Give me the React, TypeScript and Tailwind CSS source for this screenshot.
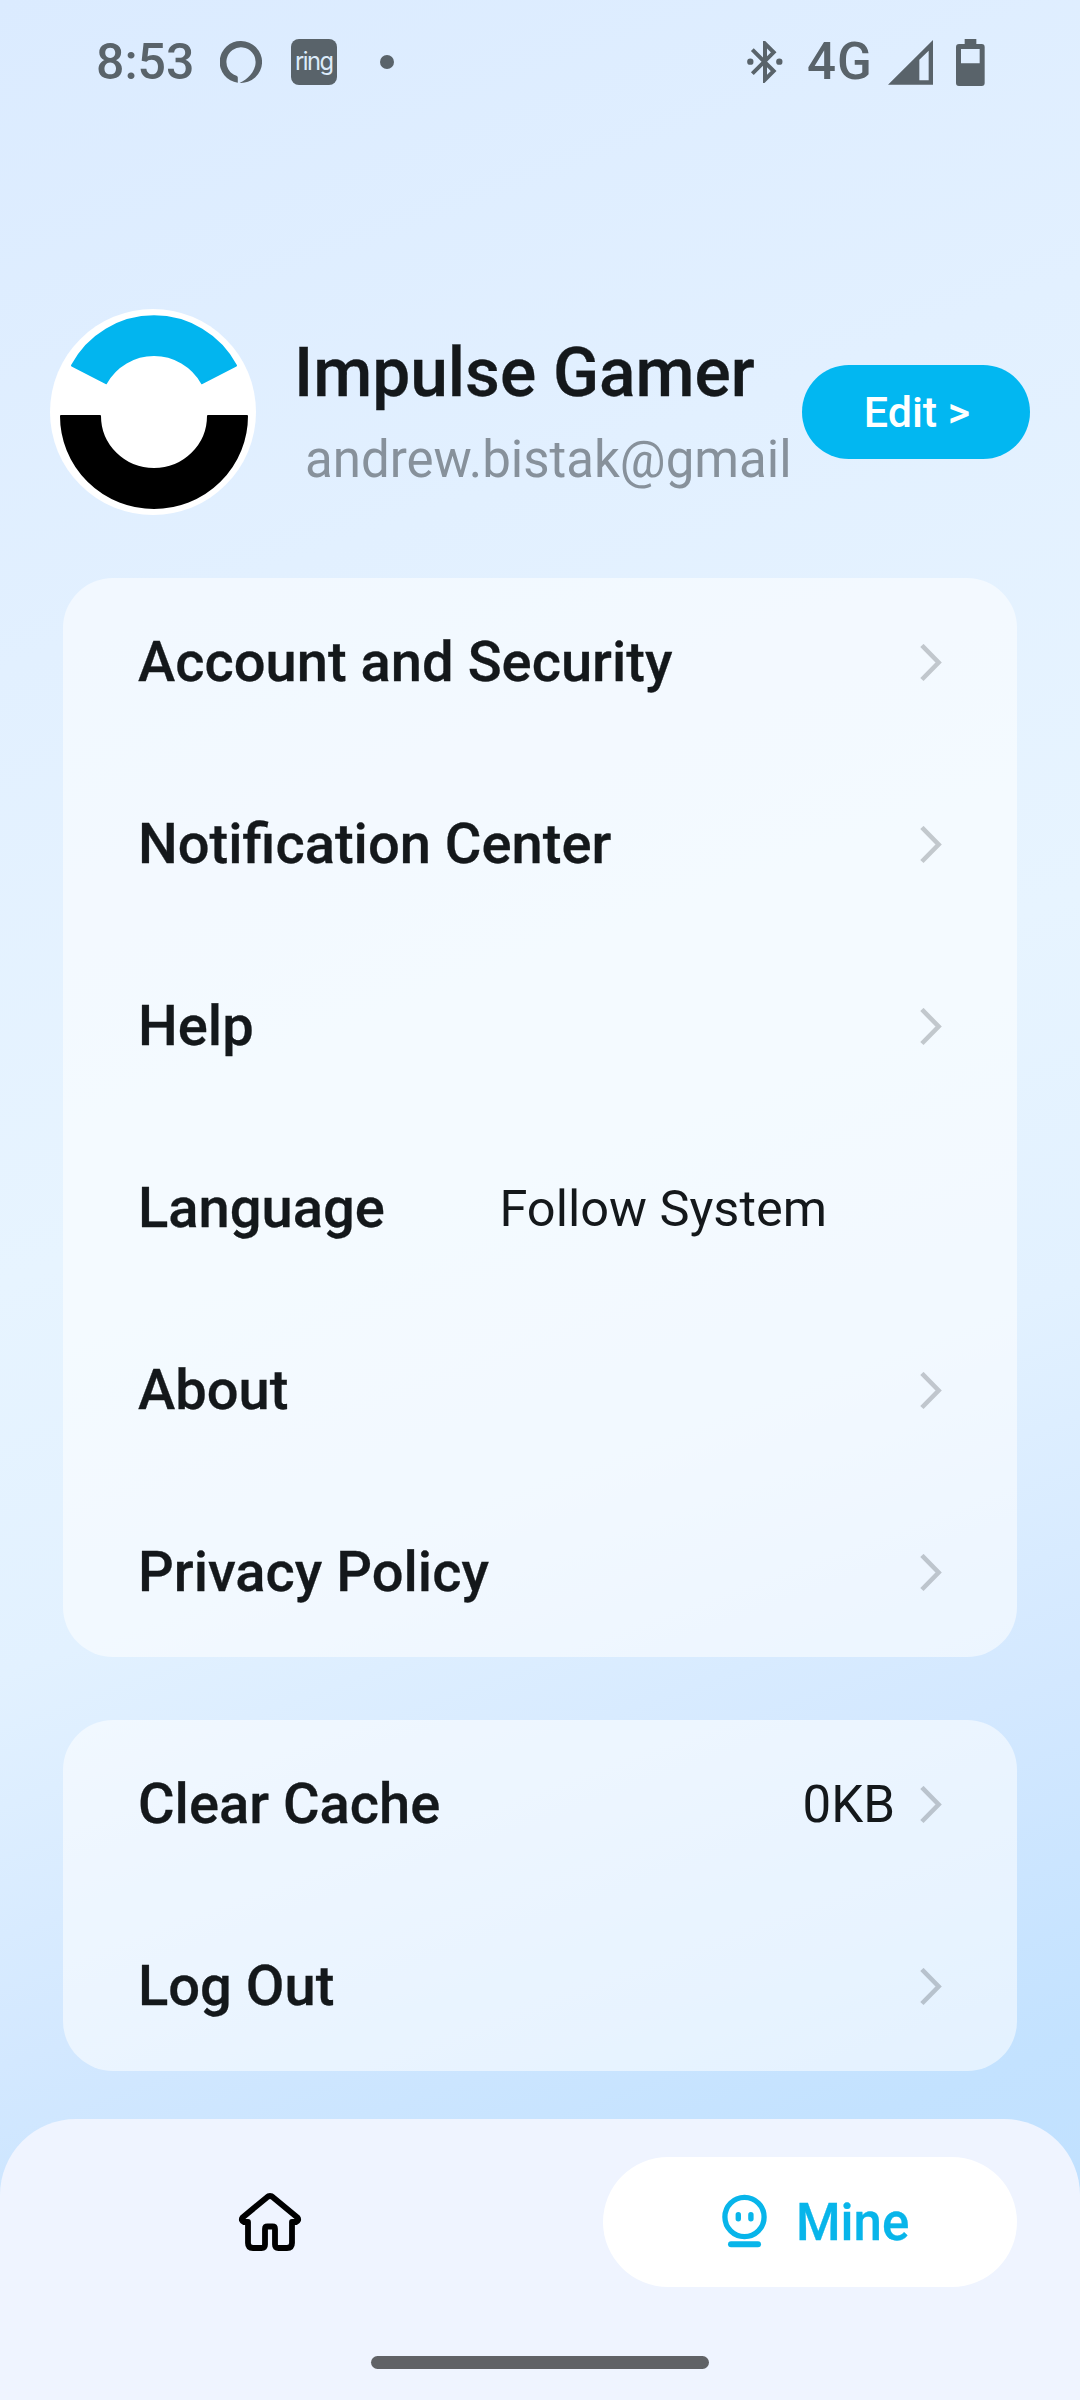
import React from "react";

type Row = { label: string; value?: string; arrow?: boolean };

const settings: Row[] = [
  { label: "Account and Security", arrow: true },
  { label: "Notification Center", arrow: true },
  { label: "Help", arrow: true },
  { label: "Language", value: "Follow System" },
  { label: "About", arrow: true },
  { label: "Privacy Policy", arrow: true },
];

const actions: Row[] = [
  { label: "Clear Cache", value: "0KB", arrow: true },
  { label: "Log Out", arrow: true },
];

function Chevron() {
  return (
    <svg className="h-[38px] w-[22px] shrink-0" viewBox="0 0 22 38" fill="none">
      <path d="M1.9 1.5 L18.6 18.5 L1.9 35.5" stroke="#14181b" strokeOpacity="0.22" strokeWidth="4.6" />
    </svg>
  );
}

function SettingsCard({ rows }: { rows: Row[] }) {
  return (
    <section className="mx-[63px] flex flex-col gap-[13px] rounded-[50px] bg-white/55 pr-[75px] pl-[75px]">
      {rows.map((row) => (
        <div key={row.label} className="flex h-[169px] items-center">
          <span className="mb-[2px] text-[56.1px] leading-[66px] font-medium whitespace-nowrap [-webkit-text-stroke:0.3px]">
            {row.label}
          </span>
          {row.value && (
            <span
              className={
                row.arrow
                  ? "mr-[25px] ml-auto text-[51px] leading-[60px]"
                  : "mr-[115px] ml-auto text-[50.5px] leading-[60px]"
              }
            >
              {row.value}
            </span>
          )}
          {row.arrow && (
            <span className={row.value ? "" : "ml-auto"}>
              <Chevron />
            </span>
          )}
        </div>
      ))}
    </section>
  );
}

function StatusBar() {
  return (
    <header className="flex h-[124px] items-center pr-[95px] pl-[96px] text-[#59636a]">
      <span className="w-[124px] text-[50px] leading-[60px] font-medium">8:53</span>
      <svg className="h-[42px] w-[42px]" viewBox="0 0 42 42">
        <path
          fill="currentColor"
          fillRule="evenodd"
          d="M21 0 A21 21 0 0 0 17.8 41.8 L17.8 36.6 Q17.8 35.3 16.5 34.8 A14.6 14.6 0 1 1 35.6 21.3 C35.5 31 27 38.6 19.6 41.95 A21 21 0 1 0 21 0Z"
        />
      </svg>
      <span className="ml-[29px] flex h-[46px] w-[46px] items-center justify-center rounded-[8px] bg-[#59636a] pb-[3px] font-[Inter,sans-serif] text-[25px] leading-[32px] tracking-[-1.6px] text-[#dcebfa]">
        <span className="scale-x-95">ring</span>
      </span>
      <span className="ml-[43px] h-[14px] w-[14px] rounded-full bg-[#59636a]" />
      <svg className="ml-auto h-[42px] w-[36px]" viewBox="0 0 108 126">
        <path
          d="M16 26 L80 90 L54 116 V8 L80 34 L16 98"
          fill="none"
          stroke="currentColor"
          strokeWidth="12"
        />
        <circle cx="10" cy="62" r="9.5" fill="currentColor" />
        <circle cx="97" cy="62" r="9.5" fill="currentColor" />
      </svg>
      <span className="ml-[24px] w-[63px] text-[51px] leading-[60px] font-medium tracking-[1px]">4G</span>
      <svg className="ml-[18px] h-[45px] w-[45px]" viewBox="0 0 135 135">
        <path fill="currentColor" fillRule="evenodd" d="M0 134 L135 0 V134Z M94 59 V121 H122 V32Z" />
      </svg>
      <svg className="ml-[23px] h-[47px] w-[29px]" viewBox="0 0 87 141">
        <path
          fill="currentColor"
          fillRule="evenodd"
          d="M26 0 H61 V15 H77 Q86 15 86 24 V132 Q86 141 77 141 H9 Q0 141 0 132 V24 Q0 15 9 15 H26Z M15 30 V73 H71 V30Z"
        />
      </svg>
    </header>
  );
}

function Avatar() {
  return (
    <svg className="h-[206px] w-[206px] shrink-0" viewBox="50 309 206 206">
      <circle cx="153" cy="412" r="103" fill="#fff" />
      <path
        d="M72 365.5 A93 93 0 0 1 236 365.5 L202 383.2 A55 55 0 0 0 106 383.2Z"
        fill="#02b5ef"
        stroke="#02b5ef"
        strokeWidth="2"
        strokeLinejoin="round"
      />
      <path
        d="M61 416 H100 A54 53 0 0 0 208 416 H247 A93 92 0 0 1 61 416Z"
        fill="#000"
        stroke="#000"
        strokeWidth="2"
        strokeLinejoin="round"
      />
    </svg>
  );
}

function TabBar() {
  return (
    <nav className="mt-auto flex h-[281px] flex-col items-center rounded-t-[76px] bg-[#eff4ff] pt-[38px]">
      <div className="flex w-full items-center justify-between pr-[63px] pl-[238px]">
        <svg className="h-[60px] w-[64px]" viewBox="0 0 64 60" fill="none">
          <path
            d="M32 4 Q30.3 4 28.8 5.4 L4.6 25.5 Q2.5 28.5 6 30 H10 V51 Q10 56 15 56 H23.5 Q27 56 27 52.5 V37 Q27 34.5 29.5 34.5 H34.5 Q37 34.5 37 37 V52.5 Q37 56 40.5 56 H49 Q54 56 54 51 V30 H58 Q61.5 28.5 59.4 25.5 L35.2 5.4 Q33.7 4 32 4Z"
            stroke="#000"
            strokeWidth="5.8"
            strokeLinejoin="round"
          />
        </svg>
        <div className="flex h-[130px] w-[414px] items-center rounded-full bg-white pl-[119px] text-[#08b5ea]">
          <svg className="-mt-[2px] h-[54px] w-[45px]" viewBox="0 0 45 54">
            <circle cx="22.5" cy="23" r="19.6" fill="none" stroke="currentColor" strokeWidth="5.3" />
            <rect x="13.6" y="18" width="5.4" height="9.4" rx="2.7" fill="currentColor" />
            <rect x="26.2" y="18" width="5.4" height="9.4" rx="2.7" fill="currentColor" />
            <rect x="6" y="47.3" width="33" height="6" rx="3" fill="currentColor" />
          </svg>
          <span className="mt-[2px] ml-[29px] text-[51px] leading-[60px] font-medium [-webkit-text-stroke:0.3px]">
            Mine
          </span>
        </div>
      </div>
      <span className="mt-[69px] h-[13px] w-[338px] rounded-full bg-[#606266]" />
    </nav>
  );
}

export default function App() {
  return (
    <main className="flex h-[2400px] w-[1080px] flex-col overflow-hidden bg-[linear-gradient(160deg,#dbebff_0%,#e2f0ff_24%,#e7f4ff_46%,#e2f1ff_60%,#d3e8ff_74%,#c3e2ff_87%,#bedfff_100%)] font-[Roboto,sans-serif] text-[#14181b]">
      <StatusBar />
      <div className="mt-[185px] mb-[63px] flex h-[206px] items-center pr-[50px] pl-[50px]">
        <Avatar />
        <div className="ml-[38px] flex flex-col">
          <h1 className="text-[67.7px] leading-[78px] font-medium whitespace-nowrap [-webkit-text-stroke:0.3px]">
            Impulse Gamer
          </h1>
          <p className="mt-[17px] ml-[11px] text-[51px] leading-[62px] text-[#87919b]">andrew.bistak@gmail</p>
        </div>
        <button className="ml-auto h-[94px] w-[228px] shrink-0 rounded-full bg-[#02b7f1] pl-[2px] text-[43px] leading-[50px] font-medium text-white">
          Edit &gt;
        </button>
      </div>
      <SettingsCard rows={settings} />
      <div className="h-[63px]" />
      <SettingsCard rows={actions} />
      <TabBar />
    </main>
  );
}
